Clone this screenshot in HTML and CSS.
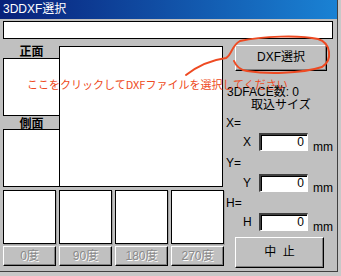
FILE: index.html
```html
<!DOCTYPE html>
<html lang="ja">
<head>
<meta charset="utf-8">
<title>3DDXF選択</title>
<link rel="stylesheet" href="styles.css">
</head>
<body>
<div class="window">
  <div class="titlebar">3DDXF選択</div>
  <div class="pathbox"></div>
  <div class="content">
    <div class="left">
      <div class="views">
        <div class="sidecol">
          <div class="vlabel first">正面</div>
          <div class="vbox"></div>
          <div class="vlabel">側面</div>
          <div class="vbox"></div>
        </div>
        <div class="mainbox"></div>
      </div>
      <div class="rots">
        <div class="rot"><div class="rbox"></div><div class="rbtn">0度</div></div>
        <div class="rot"><div class="rbox"></div><div class="rbtn">90度</div></div>
        <div class="rot"><div class="rbox"></div><div class="rbtn">180度</div></div>
        <div class="rot"><div class="rbox"></div><div class="rbtn">270度</div></div>
      </div>
    </div>
    <div class="right">
      <div class="btn dxf">DXF選択</div>
      <div class="count">3DFACE数: 0</div>
      <div class="sizehead">取込サイズ</div>
      <div class="axis first-axis">X=</div>
      <div class="field fx"><span class="flabel">X</span><div class="input">0</div><span class="unit">mm</span></div>
      <div class="axis">Y=</div>
      <div class="field fy"><span class="flabel">Y</span><div class="input">0</div><span class="unit">mm</span></div>
      <div class="axis ah">H=</div>
      <div class="field fh"><span class="flabel">H</span><div class="input">0</div><span class="unit">mm</span></div>
      <div class="btn stop">中&nbsp;&nbsp;止</div>
    </div>
  </div>
  <svg class="annot" width="341" height="276" viewBox="0 0 341 276">
    <path d="M186 75 Q204 61 226 58 C232 55 231 46 240 41 C262 36 300 35 318 39 C331 43 333 60 322 67 C300 74 266 74 247 71 C240 70 236 66 234 61" fill="none" stroke="#ee4a22" stroke-width="2" stroke-linecap="round"/>
  </svg>
  <div class="hint">ここをクリックしてDXFファイルを選択してください</div>
</div>
</body>
</html>
```
FILE: styles.css
```css
* { box-sizing: border-box; }
body {
  margin: 0;
  background: #c8c8c8;
  font-family: "Liberation Sans", "Noto Sans CJK JP", sans-serif;
  font-size: 12px;
  color: #000;
}
.window {
  position: relative;
  width: 338px;
  height: 272px;
  background: #c0c0c0;
  border-right: 1px solid #404040;
  border-bottom: 1px solid #404040;
}
.titlebar {
  height: 19px;
  background: linear-gradient(to right, #08207a, #1a82d4);
  color: #fff;
  line-height: 19px;
  padding-left: 3px;
}
.pathbox {
  margin: 2px 0 0 3px;
  width: 330px;
  height: 18px;
  background: #fff;
  border: 1px solid #000;
}
.content {
  display: flex;
  margin-top: 1px;
  padding-left: 3px;
}
.left { width: 221px; }
.views { display: flex; align-items: flex-start; }
.sidecol { width: 57px; display: flex; flex-direction: column; }
.vlabel {
  height: 13px;
  line-height: 13px;
  text-align: center;
  font-family: "Noto Sans CJK JP", sans-serif;
  font-weight: bold;
}
.vlabel.first { height: 18px; padding-top: 4px; line-height: 14px; }
.vbox {
  height: 58px;
  background: #fff;
  border: 1px solid #000;
}
.mainbox {
  width: 164px;
  height: 141px;
  margin: 6px 0 0 -1px;
  background: #fff;
  border: 1px solid #000;
}
.rots {
  display: grid;
  grid-template-columns: repeat(4, 53px);
  column-gap: 3px;
  margin-top: 3px;
}
.rbox {
  height: 54px;
  background: #fff;
  border: 1px solid #000;
  box-shadow: 1px 1px 0 #a0a0a0;
}
.rbtn {
  margin-top: 2px;
  height: 20px;
  line-height: 18px;
  text-align: center;
  color: #8a8a8a;
  text-shadow: 1px 1px 0 #fff;
  border-top: 1px solid #fff;
  border-left: 1px solid #fff;
  border-right: 1px solid #000;
  border-bottom: 1px solid #000;
  box-shadow: inset -1px -1px 0 #808080;
}
.right { margin-left: 2px; width: 110px; }
.btn {
  text-align: center;
  border-top: 1px solid #fff;
  border-left: 1px solid #fff;
  border-right: 1px solid #000;
  border-bottom: 1px solid #000;
  box-shadow: inset -1px -1px 0 #808080;
}
.dxf {
  margin: 5px 0 0 9px;
  width: 92px;
  height: 26px;
  line-height: 23px;
}
.stop {
  margin: 6px 0 0 9px;
  width: 89px;
  height: 31px;
  line-height: 28px;
}
.count { margin-top: 15px; padding-left: 1px; line-height: 13px; }
.sizehead { margin-left: 25px; line-height: 13px; }
.axis { line-height: 13px; margin-top: 6px; }
.first-axis { margin-top: 5px; }
.ah { margin-top: 5px; }
.field { display: flex; height: 18px; margin-top: 3px; }
.fy { margin-top: 4px; }
.flabel {
  align-self: center;
  width: 33px;
  padding-left: 17px;
  line-height: 13px;
}
.input {
  width: 49px;
  height: 18px;
  background: #fff;
  text-align: right;
  padding-right: 3px;
  line-height: 14px;
  border-top: 2px solid #404040;
  border-left: 2px solid #404040;
  border-right: 1px solid #fff;
  border-bottom: 1px solid #fff;
  box-shadow: inset 0 1px 0 #000, inset 1px 0 0 #000;
}
.unit {
  align-self: flex-end;
  margin: 0 0 -3px 5px;
  line-height: 13px;
}
.annot {
  position: absolute;
  left: 0;
  top: 0;
  pointer-events: none;
}
.hint {
  position: absolute;
  left: 27px;
  top: 78px;
  font-family: "Noto Sans CJK JP", sans-serif;
  font-size: 11px;
  line-height: 13px;
  color: #ee4a22;
  white-space: nowrap;
}
```
